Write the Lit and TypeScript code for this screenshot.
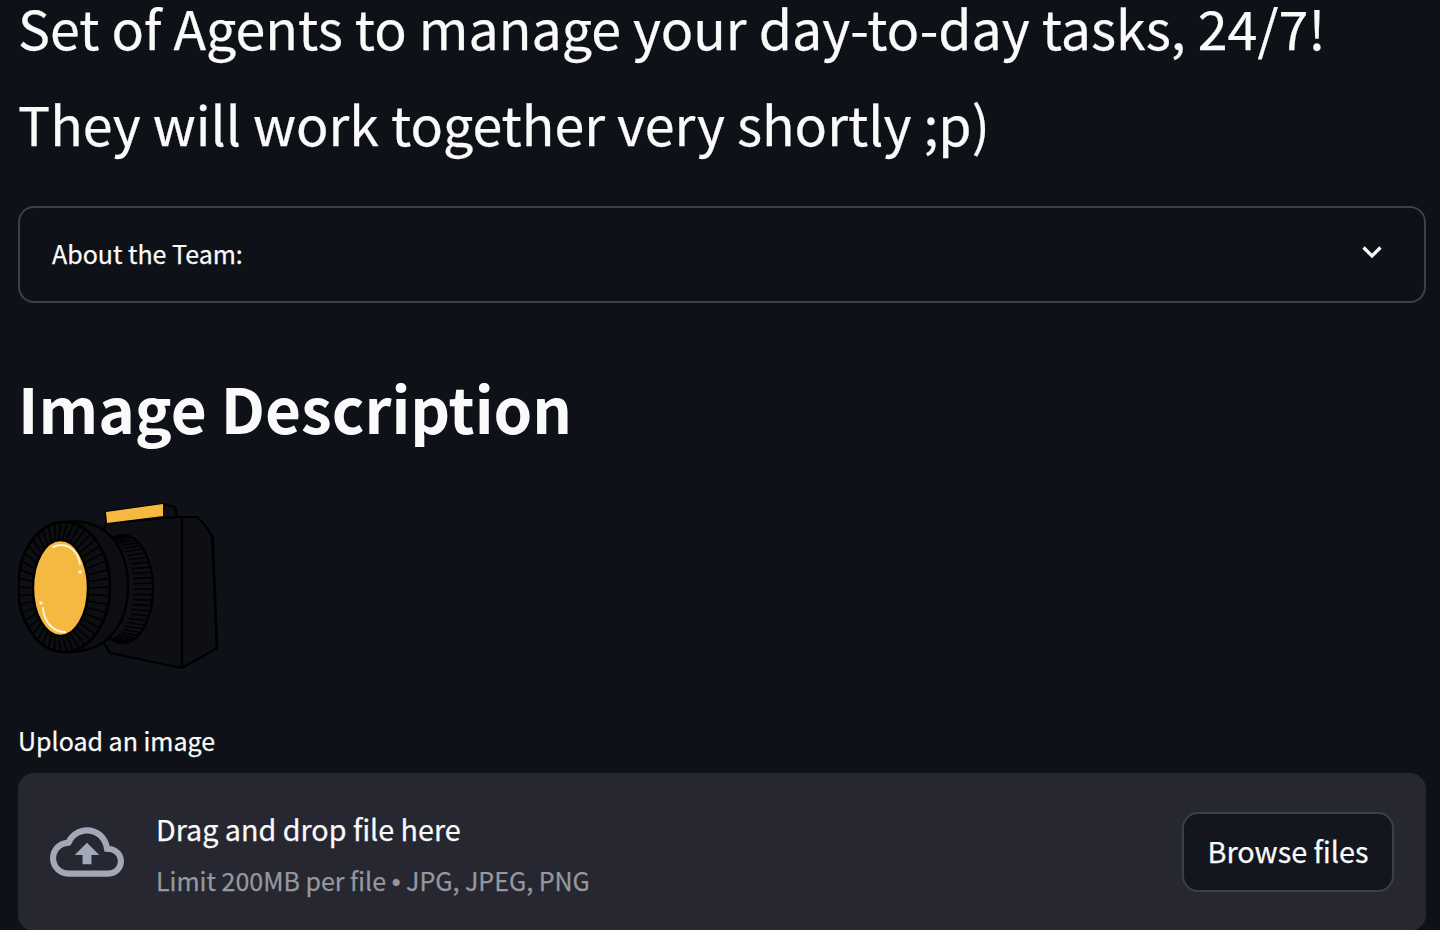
import { LitElement, css, html, svg } from "lit";
import { customElement } from "lit/decorators.js";

type Oval = { cx: number; cy: number; rx: number; ry: number };

// ribs on the lens: short strokes from one ellipse out to another
function ribs(from: Oval, to: Oval, n: number, start = 0, end = Math.PI * 2) {
  const out = [];
  for (let i = 0; i < n; i++) {
    const a = start + (i / n) * (end - start);
    out.push(
      svg`<line x1=${from.cx + from.rx * Math.cos(a)} y1=${from.cy + from.ry * Math.sin(a)} x2=${to.cx + to.rx * Math.cos(a)} y2=${to.cy + to.ry * Math.sin(a)} />`,
    );
  }
  return out;
}

@customElement("app-root")
export class AppRoot extends LitElement {
  static styles = css`
    :host {
      display: block;
      height: 930px;
      overflow: hidden;
      background: #0e1117;
      color: #fafafa;
      font-family: "Noto Sans CJK SC", "Noto Sans", sans-serif;
      -webkit-text-stroke: 0.25px currentColor;
    }
    .page {
      display: flex;
      flex-direction: column;
      padding: 0 14px 0 18px;
    }
    .lead {
      margin: 42px 0 0;
      font-size: 53.7px;
      line-height: 54px;
      font-weight: 400;
      white-space: nowrap;
    }
    .lead:first-child {
      margin-top: 0;
    }
    .expander {
      margin-top: 56px;
      height: 97px;
      box-sizing: border-box;
      border: 2px solid #3d4047;
      border-radius: 16px;
      display: flex;
      align-items: center;
      justify-content: space-between;
      padding: 0 42px 0 32px;
      font-size: 25px;
    }
    .expander span {
      margin-bottom: 4px;
    }
    .expander svg {
      display: block;
      margin-top: -6px;
    }
    h2 {
      margin: 54px 0 0;
      font-size: 62px;
      line-height: 100px;
      font-weight: 600;
      white-space: nowrap;
      -webkit-text-stroke: 0;
    }
    .camera {
      display: block;
      margin-top: 43px;
      filter: blur(0.7px);
    }
    .label {
      margin-top: 50px;
      font-size: 25px;
      line-height: 36px;
    }
    .drop {
      margin-top: 15px;
      height: 158px;
      flex: none;
      box-sizing: border-box;
      background: #262730;
      border-radius: 16px;
      display: flex;
      align-items: center;
      padding: 0 32px;
    }
    .cloud {
      display: block;
      margin-right: 32px;
      flex: none;
    }
    .drop-text {
      display: flex;
      flex-direction: column;
      gap: 15px;
      flex: 1;
      padding-top: 6px;
    }
    .drop-title {
      font-size: 28.7px;
      line-height: 36px;
    }
    .drop-limit {
      font-size: 25px;
      line-height: 36px;
      color: #96989e;
    }
    .bullet {
      font-family: "Liberation Sans", sans-serif;
    }
    button {
      font: inherit;
      font-size: 28.8px;
      color: #fafafa;
      width: 212px;
      height: 80px;
      box-sizing: border-box;
      background: #13161f;
      border: 2px solid #3d4047;
      border-radius: 16px;
      padding: 0 0 4px;
    }
  `;

  private renderCamera() {
    const glass = { cx: 42.5, cy: 88, rx: 27.5, ry: 48 };
    const ring = { cx: 46, cy: 87, rx: 46, ry: 65 };
    const barrel = { cx: 105, cy: 89, rx: 30, ry: 54 };
    const barrelIn = { cx: 90, cy: 89, rx: 26, ry: 50 };
    return html`
      <svg class="camera" width="202" height="172" viewBox="0 0 202 172" fill="none" stroke="#000" stroke-width="2.2" stroke-linejoin="round">
        <path d="M88 23 157 17 179 17 186 24 195 37 199 148 164 168 92 153 60 100Z" fill="#0d0f14" />
        <path d="M164 17V168M194 37 199 148" />
        <path d="M88 12 145 4 157 7 159 17 88 23Z" fill="#0d0f14" />
        <path d="M88 12 145 4V16L89 23Z" fill="#f5b942" stroke="none" />
        <ellipse cx="105" cy="89" rx="30" ry="54" fill="#0d0f14" />
        <g stroke-width="1.5">${ribs(barrelIn, barrel, 30, -Math.PI / 2, Math.PI / 2)}</g>
        <path d="M46 22C90 16 110 50 110 86 110 122 92 154 46 152Z" fill="#0c0e12" />
        <ellipse cx="46" cy="87" rx="46" ry="65" fill="#0c0e12" stroke-width="2.6" />
        <g stroke-width="1.5">${ribs(glass, ring, 46)}</g>
        <ellipse cx="42.5" cy="88" rx="27.5" ry="48" fill="#f5b942" stroke-width="2.4" />
        <path d="M35 47C48 41 60 50 62 64" stroke="#fff3d4" stroke-width="2" stroke-linecap="round" />
        <path d="M25 108C26 122 35 132 47 132" stroke="#fff3d4" stroke-width="2" stroke-linecap="round" />
        <circle cx="62" cy="72" r="1.8" fill="#fff3d4" stroke="none" />
        <circle cx="23" cy="103" r="1.8" fill="#fff3d4" stroke="none" />
      </svg>
    `;
  }

  render() {
    return html`
      <div class="page">
        <p class="lead">Set of Agents to manage your day-to-day tasks, 24/7!</p>
        <p class="lead">They will work together very shortly ;p)</p>
        <div class="expander">
          <span>About the Team:</span>
          <svg width="20" height="14" viewBox="0 0 20 14" fill="none" stroke="#fafafa" stroke-width="3.2">
            <path d="M1.5 2.5 10 11l8.5-8.5" />
          </svg>
        </div>
        <h2>Image Description</h2>
        ${this.renderCamera()}
        <div class="label">Upload an image</div>
        <div class="drop">
          <svg class="cloud" width="74" height="50" viewBox="0 4 24 16" fill="#a3a8b8">
            <path d="M19.35 10.04C18.67 6.59 15.64 4 12 4 9.11 4 6.6 5.64 5.35 8.04 2.34 8.36 0 10.91 0 14c0 3.31 2.69 6 6 6h13c2.76 0 5-2.24 5-5 0-2.64-2.05-4.78-4.65-4.96zM19 18H6c-2.21 0-4-1.79-4-4 0-2.05 1.53-3.76 3.56-3.97l1.07-.11.5-.95C8.08 7.14 9.94 6 12 6c2.62 0 4.88 1.86 5.39 4.43l.3 1.5 1.53.11c1.56.1 2.78 1.41 2.78 2.96 0 1.65-1.35 3-3 3zM8 13h2.55v3h2.9v-3H16l-4-4z" />
          </svg>
          <div class="drop-text">
            <div class="drop-title">Drag and drop file here</div>
            <div class="drop-limit">Limit 200MB per file <span class="bullet">•</span> JPG, JPEG, PNG</div>
          </div>
          <button type="button">Browse files</button>
        </div>
      </div>
    `;
  }
}
